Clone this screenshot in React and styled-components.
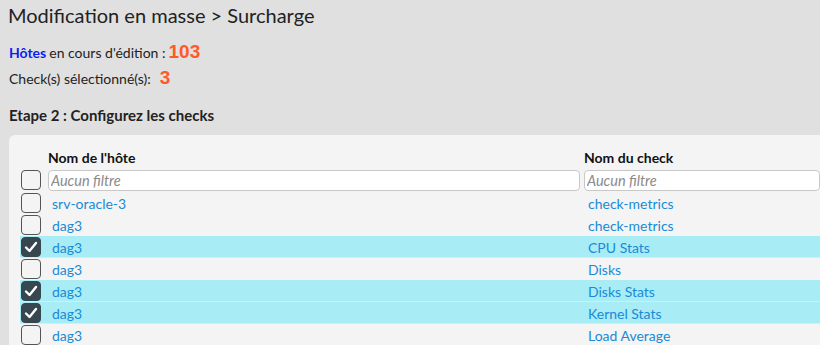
import React from "react";
import styled, { createGlobalStyle } from "styled-components";

const Global = createGlobalStyle`
  html, body { margin: 0; padding: 0; background: #e0e0e0; overflow: hidden; }
  body { font-family: Lato, "Noto Sans", sans-serif; color: #222; }
`;

const Page = styled.div`
  padding: 0 0 0 9px;
  width: 820px;
  height: 345px;
  overflow: hidden;
  box-sizing: border-box;
`;

const Title = styled.h1`
  margin: 0 0 0 -1px;
  padding-top: 3px;
  font-size: 20px;
  font-weight: 400;
  line-height: 24px;
  color: #222;
`;

const InfoLine = styled.div`
  display: flex;
  align-items: baseline;
  height: 26px;
  margin-top: ${(p) => p.$top || 0}px;
  font-size: 14px;
  line-height: 26px;
  color: #222;
`;

const HostLink = styled.span`
  color: #0a1ef5;
  font-weight: 700;
  margin-right: 3px;
`;

const Count = styled.span`
  font-family: "Liberation Sans", Arial, sans-serif;
  font-weight: 700;
  font-size: 19px;
  line-height: 26px;
  color: #ff5a26;
  margin-left: ${(p) => p.$gap}px;
`;

const Step = styled.h2`
  margin: 14px 0 0 0;
  font-size: 15px;
  font-weight: 700;
  line-height: 20px;
  color: #222;
`;

const Panel = styled.div`
  margin-top: 10px;
  background: #f4f4f4;
  border-top-left-radius: 6px;
  padding: 12px 0 0 11px;
  height: 240px;
  overflow: hidden;
`;

const Grid = styled.div`
  display: grid;
  grid-template-columns: 28px 536px 1fr;
`;

const HeadCell = styled.div`
  font-size: 14px;
  font-weight: 700;
  line-height: 22px;
  height: 23px;
  color: #111;
`;

const FilterCell = styled.div`
  height: 22px;
  display: flex;
  align-items: flex-start;
`;

const Cell = styled.div`
  height: 22px;
  display: flex;
  align-items: center;
  background: ${(p) => (p.$on ? "#a8ecf6" : "transparent")};
  box-shadow: ${(p) => (p.$on ? "inset 0 -1px 0 #c4f3fa" : "none")};
  padding-left: ${(p) => p.$pad || 0}px;
  font-size: 14px;
  color: #1a8ad6;
`;

const FilterInput = styled.input`
  box-sizing: border-box;
  width: ${(p) => p.$w};
  height: 21px;
  border: 1px solid #c8c8c8;
  border-radius: 4px;
  background: #fff;
  padding: 0 2px;
  font-family: Lato, sans-serif;
  font-size: 14.5px;
  font-style: italic;
  outline: none;
  &::placeholder { color: #8a8a8a; font-style: italic; }
`;

const Box = styled.span`
  box-sizing: border-box;
  width: 20px;
  height: 20px;
  margin-left: 1px;
  border: 1.5px solid #555;
  border-radius: 4px;
  background: ${(p) => (p.$checked ? "#37474f" : "#f4f4f4")};
  border-color: ${(p) => (p.$checked ? "#37474f" : "#555")};
  display: flex;
  align-items: center;
  justify-content: center;
`;

const Check = () => (
  <svg width="14" height="12" viewBox="0 0 14 12">
    <path d="M2 6.5 L5.5 10 L12 2" fill="none" stroke="#fff" strokeWidth="2.4" strokeLinecap="round" strokeLinejoin="round" />
  </svg>
);

const rows = [
  ["srv-oracle-3", "check-metrics", false],
  ["dag3", "check-metrics", false],
  ["dag3", "CPU Stats", true],
  ["dag3", "Disks", false],
  ["dag3", "Disks Stats", true],
  ["dag3", "Kernel Stats", true],
  ["dag3", "Load Average", false],
];

export default function App() {
  return (
    <>
      <Global />
      <Page>
        <Title>Modification en masse &gt; Surcharge</Title>
        <InfoLine $top={12}>
          <HostLink>Hôtes</HostLink>en cours d'édition :<Count $gap={3}>103</Count>
        </InfoLine>
        <InfoLine>
          Check(s) sélectionné(s):<Count $gap={9}>3</Count>
        </InfoLine>
        <Step>Etape 2 : Configurez les checks</Step>
        <Panel>
          <Grid>
            <HeadCell />
            <HeadCell>Nom de l'hôte</HeadCell>
            <HeadCell>Nom du check</HeadCell>
            <FilterCell><Box /></FilterCell>
            <FilterCell><FilterInput $w="532px" placeholder="Aucun filtre" /></FilterCell>
            <FilterCell><FilterInput $w="100%" placeholder="Aucun filtre" /></FilterCell>
            {rows.map(([h, c, on], i) => (
              <React.Fragment key={i}>
                <Cell $on={on}><Box $checked={on}>{on && <Check />}</Box></Cell>
                <Cell $on={on} $pad={4}>{h}</Cell>
                <Cell $on={on} $pad={4}>{c}</Cell>
              </React.Fragment>
            ))}
          </Grid>
        </Panel>
      </Page>
    </>
  );
}
